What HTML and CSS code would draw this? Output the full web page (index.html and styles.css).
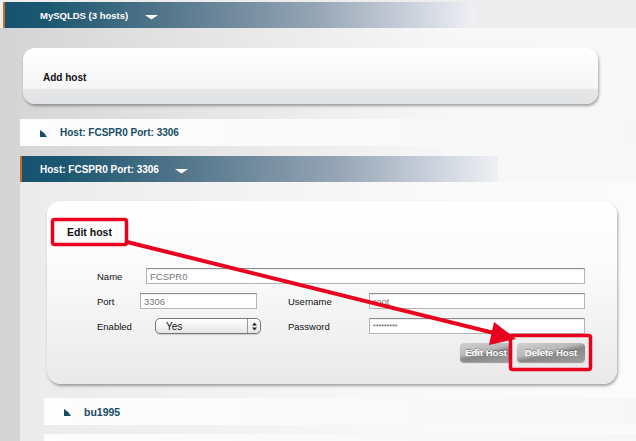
FILE: index.html
```html
<!DOCTYPE html>
<html lang="en">
<head>
    <meta charset="UTF-8">
    <meta name="viewport" content="width=device-width, initial-scale=1.0">
    <title>MySQLDS hosts</title>
    <link rel="stylesheet" href="styles.css">
</head>
<body>
    <div class="datasource">
        <div class="bar bar-top">
            <span class="bar-title">MySQLDS (3 hosts)</span>
            <svg class="caret" viewBox="0 0 13 5"><polygon points="0,0 13,0 6.5,4.5"/></svg>
        </div>

        <div class="datasource-body">
            <div class="panel panel-add">
                <span class="panel-title">Add host</span>
            </div>

            <div class="row host-row">
                <svg class="row-icon" viewBox="0 0 8 8"><path d="M0 0 Q5 2.5 8 8 L0 8 Z"/></svg>
                <span>Host: FCSPR0 Port: 3306</span>
            </div>

            <div class="host">
                <div class="bar bar-host">
                    <span class="bar-title">Host: FCSPR0 Port: 3306</span>
                    <svg class="caret" viewBox="0 0 13 5"><polygon points="0,0 13,0 6.5,4.5"/></svg>
                </div>
                <div class="host-body">
                    <div class="panel panel-edit">
                        <div class="panel-title">Edit host</div>
                        <form class="host-form">
                            <label for="hname">Name</label>
                            <input class="field field-name" id="hname" type="text" value="FCSPR0">

                            <label for="hport">Port</label>
                            <input class="field field-port" id="hport" type="text" value="3306">
                            <label class="label-right" for="huser">Username</label>
                            <input class="field" id="huser" type="text" value="root">

                            <label for="henabled">Enabled</label>
                            <div class="select">
                                <select id="henabled">
                                    <option selected>Yes</option>
                                    <option>No</option>
                                </select>
                                <span class="stepper">
                                    <svg viewBox="0 0 5 9"><polygon points="2.5,0.5 5,3.5 0,3.5"/><polygon points="0,5.5 5,5.5 2.5,8.5"/></svg>
                                </span>
                            </div>
                            <label class="label-right" for="hpass">Password</label>
                            <input class="field field-pass" id="hpass" type="text" value="*********">

                            <div class="actions">
                                <button type="button" class="btn btn-edit">Edit Host</button>
                                <button type="button" class="btn btn-delete">Delete Host</button>
                            </div>
                        </form>
                    </div>

                    <div class="row db-row">
                        <svg class="row-icon" viewBox="0 0 8 8"><path d="M0 0 Q5 2.5 8 8 L0 8 Z"/></svg>
                        <span>bu1995</span>
                    </div>
                    <div class="row db-row"></div>
                </div>
            </div>
        </div>
    </div>

    <!-- anotaciones de la captura -->
    <svg class="annotations" viewBox="0 0 636 441">
        <rect x="52.5" y="219.5" width="74" height="25" rx="2" />
        <rect x="510.5" y="335.5" width="80" height="34" rx="2" />
        <line x1="127" y1="242" x2="494" y2="333" />
        <polygon class="head" points="516,339 494,322 489,345" />
    </svg>
</body>
</html>
```

FILE: styles.css
```css
/* Base */
* {
    box-sizing: border-box;
    margin: 0;
    padding: 0;
}

html, body {
    overflow: hidden;
}

body {
    font-family: "Liberation Sans", Arial, sans-serif;
    background-color: #ededed;
    color: #222;
    padding-top: 2px;
    position: relative;
    min-height: 441px;
}

/* Barras de cabecera */
.bar {
    display: flex;
    align-items: center;
    height: 26px;
    border-left: 2px solid #c86c28;
    background: linear-gradient(to right, #175370 0%, #1c5771 9%, #55778c 35%, #95a5b5 66%, #c5ccd8 84%, #eef0f3 100%);
    color: #fff;
    font-weight: bold;
}

.bar-top {
    margin-left: 3px;
    width: 472px;
    padding-left: 35px;
    font-size: 9.5px;
}

.bar-host {
    width: 478px;
    padding-left: 18px;
    font-size: 10px;
}

.caret {
    width: 13px;
    height: 5px;
    margin-left: 17px;
    margin-top: 4px;
    fill: #fff;
}

.bar-host .caret {
    margin-left: 16px;
}

/* Cuerpo */
.datasource-body {
    background: linear-gradient(to right, #d4d4d4 0%, #e9e9e9 40%, #f7f7f7 70%, #f8f8f8 100%);
    padding-top: 20px;
    padding-bottom: 20px;
}

.panel {
    border-radius: 12px;
    box-shadow: 1px 2px 3px rgba(0, 0, 0, 0.35);
}

.panel-add {
    display: flex;
    align-items: center;
    margin-left: 23px;
    width: 575px;
    height: 56px;
    padding: 2px 0 0 20px;
    background: linear-gradient(#ffffff 0%, #f6f6f6 72%, #e6e7e9 73%, #e2e3e5 100%);
}

.panel-title {
    font-size: 10px;
    font-weight: bold;
    color: #111;
}

/* Filas */
.row {
    display: flex;
    align-items: center;
    height: 27px;
    padding-left: 20px;
    background: linear-gradient(to right, #fdfdfd, #f9f9f9 60%, #f7f7f7);
    color: #164b64;
    font-weight: bold;
}

.row-icon {
    width: 7px;
    height: 7px;
    fill: #164d66;
    margin: 2px 13px 0 0;
}

.host-row {
    margin: 15px 0 10px 20px;
    font-size: 10px;
}

.db-row {
    margin: 14px 0 0 24px;
    font-size: 10.5px;
}

.db-row + .db-row {
    margin-top: 9px;
}

/* Host abierto */
.host {
    margin-left: 20px;
}

.host-body {
    background: linear-gradient(to right, #ebebeb 0%, #f4f4f4 40%, #fafafa 70%, #fbfbfb 100%);
    padding-top: 19px;
}

.panel-edit {
    margin-left: 27px;
    width: 570px;
    border-radius: 14px;
    padding: 24px 0 25px 20px;
    background: linear-gradient(#ffffff 0%, #fafafa 40%, #e9e9e9 100%);
}

.panel-edit .panel-title {
    line-height: 14px;
    font-size: 10.5px;
}

.host-form {
    display: grid;
    grid-template-columns: 43px 121px 108px 216px;
    grid-auto-rows: 16px;
    row-gap: 9px;
    margin: 29px 0 0 30px;
}

.host-form label {
    align-self: center;
    font-size: 9.5px;
    color: #111;
}

.host-form .label-right {
    padding-left: 27px;
}

.field {
    height: 16px;
    padding: 0 3px;
    border: 1px solid #b4b4b4;
    border-top-color: #8c8c8c;
    background-color: #fff;
    box-shadow: inset 0 1px 1px rgba(0, 0, 0, 0.08);
    font-family: "Liberation Sans", Arial, sans-serif;
    font-size: 9.5px;
    color: #777;
    outline: none;
}

.field-name {
    grid-column: 2 / 5;
    margin-left: 6px;
}

.field-port {
    width: 117px;
}

.field-pass {
    font-size: 7px;
    color: #555;
}

/* Select estilo mac */
.select {
    display: flex;
    width: 106px;
    height: 16px;
    margin-left: 15px;
    border: 1px solid #777;
    border-radius: 5px;
    background: linear-gradient(#ffffff, #f1f1f1 60%, #e4e4e4);
    box-shadow: 0 1px 1px rgba(0, 0, 0, 0.15);
    overflow: hidden;
}

.select select {
    flex: 1;
    appearance: none;
    -webkit-appearance: none;
    border: none;
    background: transparent;
    padding-left: 10px;
    font-family: "Liberation Sans", Arial, sans-serif;
    font-size: 10px;
    color: #111;
    outline: none;
}

.stepper {
    display: flex;
    align-items: center;
    justify-content: center;
    width: 13px;
    border-left: 1px solid #9a9a9a;
}

.stepper svg {
    width: 5px;
    height: 9px;
    fill: #222;
}

/* Botones */
.actions {
    grid-column: 1 / 5;
    display: flex;
    justify-content: flex-end;
    gap: 5px;
    height: 19px;
}

.btn {
    height: 19px;
    border: none;
    border-radius: 4px;
    background: linear-gradient(168deg, #d2d2d2 0%, #b8b8b8 42%, #888 56%, #9e9e9e 100%);
    box-shadow: 0 1px 1px rgba(0, 0, 0, 0.35);
    color: #fff;
    font-family: "Liberation Sans", Arial, sans-serif;
    font-size: 9.5px;
    font-weight: bold;
    text-shadow: 0 -1px 0 rgba(0, 0, 0, 0.3);
    cursor: pointer;
}

.btn-edit {
    width: 52px;
}

.btn-delete {
    width: 68px;
}

/* Anotaciones */
.annotations {
    position: absolute;
    top: 0;
    left: 0;
    width: 636px;
    height: 441px;
    pointer-events: none;
}

.annotations rect {
    fill: none;
    stroke: #e8001e;
    stroke-width: 3.5;
}

.annotations line {
    stroke: #e8001e;
    stroke-width: 4;
}

.annotations .head {
    fill: #e8001e;
}
```
